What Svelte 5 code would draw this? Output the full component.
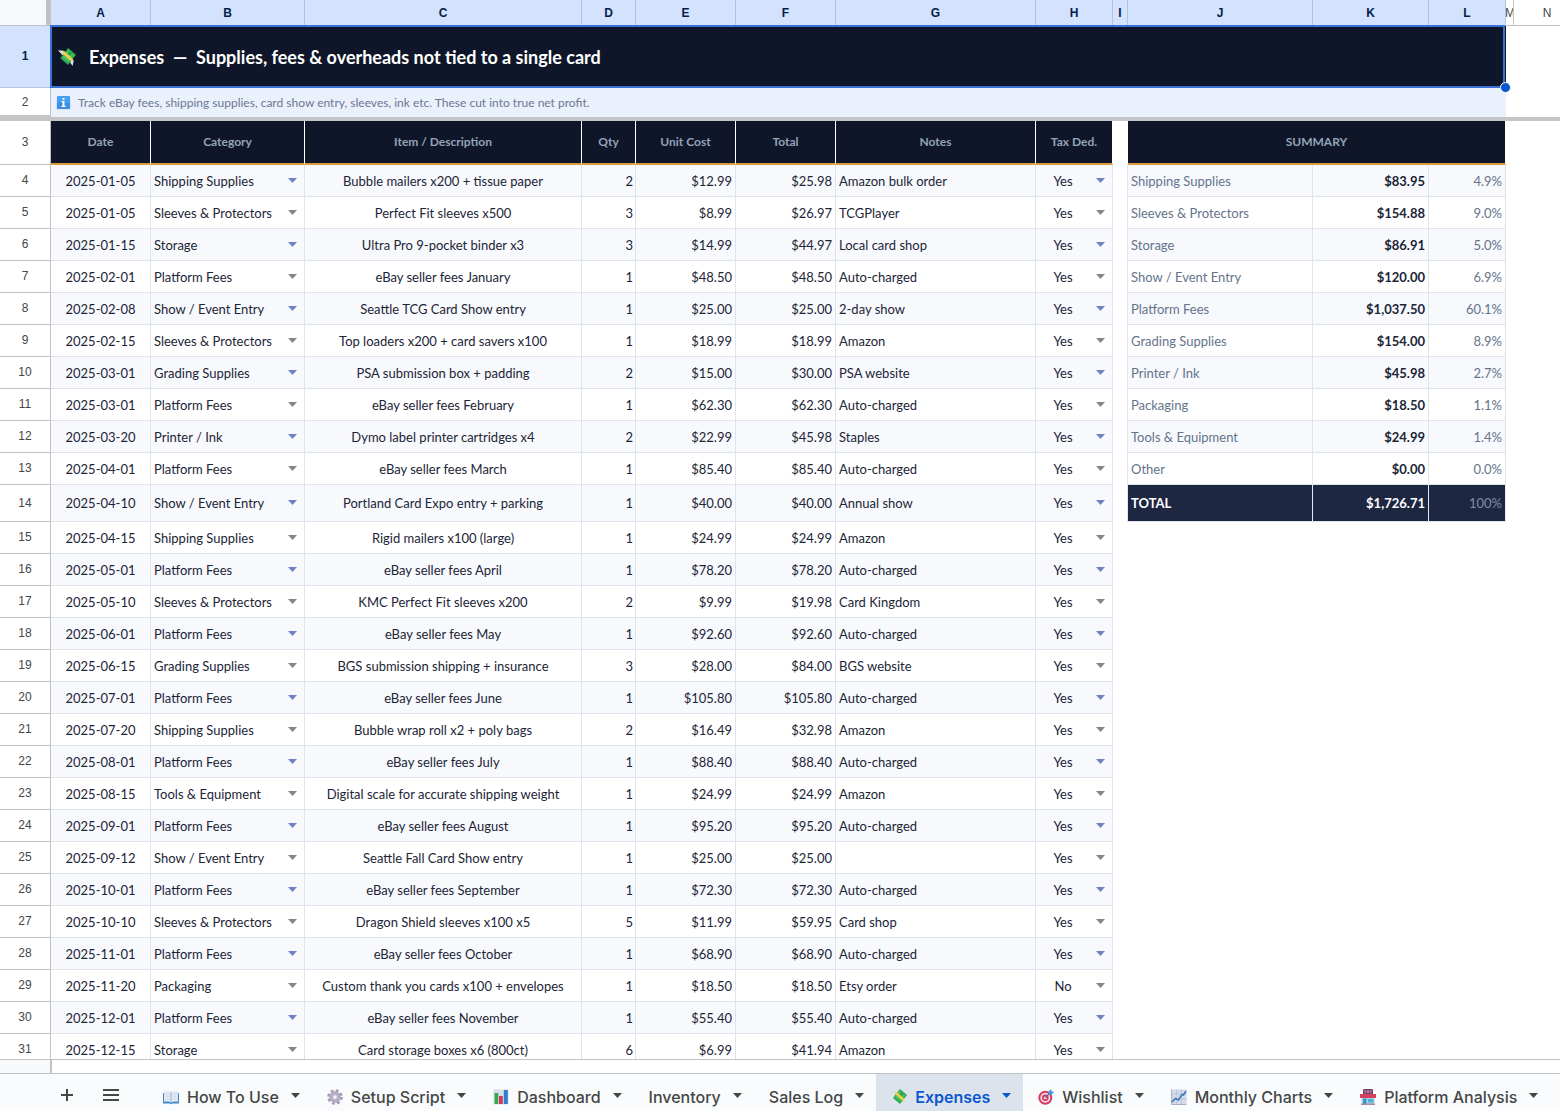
<script>
  const columns = ['A', 'B', 'C', 'D', 'E', 'F', 'G', 'H', 'I', 'J', 'K', 'L', 'M', 'N'];

  const categories = [
    'Shipping Supplies', 'Sleeves & Protectors', 'Storage', 'Show / Event Entry', 'Platform Fees',
    'Grading Supplies', 'Printer / Ink', 'Packaging', 'Tools & Equipment', 'Other'
  ];

  const expenses = [
    ['2025-01-05', 'Shipping Supplies', 'Bubble mailers x200 + tissue paper', '2', '$12.99', '$25.98', 'Amazon bulk order', 'Yes'],
    ['2025-01-05', 'Sleeves & Protectors', 'Perfect Fit sleeves x500', '3', '$8.99', '$26.97', 'TCGPlayer', 'Yes'],
    ['2025-01-15', 'Storage', 'Ultra Pro 9-pocket binder x3', '3', '$14.99', '$44.97', 'Local card shop', 'Yes'],
    ['2025-02-01', 'Platform Fees', 'eBay seller fees January', '1', '$48.50', '$48.50', 'Auto-charged', 'Yes'],
    ['2025-02-08', 'Show / Event Entry', 'Seattle TCG Card Show entry', '1', '$25.00', '$25.00', '2-day show', 'Yes'],
    ['2025-02-15', 'Sleeves & Protectors', 'Top loaders x200 + card savers x100', '1', '$18.99', '$18.99', 'Amazon', 'Yes'],
    ['2025-03-01', 'Grading Supplies', 'PSA submission box + padding', '2', '$15.00', '$30.00', 'PSA website', 'Yes'],
    ['2025-03-01', 'Platform Fees', 'eBay seller fees February', '1', '$62.30', '$62.30', 'Auto-charged', 'Yes'],
    ['2025-03-20', 'Printer / Ink', 'Dymo label printer cartridges x4', '2', '$22.99', '$45.98', 'Staples', 'Yes'],
    ['2025-04-01', 'Platform Fees', 'eBay seller fees March', '1', '$85.40', '$85.40', 'Auto-charged', 'Yes'],
    ['2025-04-10', 'Show / Event Entry', 'Portland Card Expo entry + parking', '1', '$40.00', '$40.00', 'Annual show', 'Yes'],
    ['2025-04-15', 'Shipping Supplies', 'Rigid mailers x100 (large)', '1', '$24.99', '$24.99', 'Amazon', 'Yes'],
    ['2025-05-01', 'Platform Fees', 'eBay seller fees April', '1', '$78.20', '$78.20', 'Auto-charged', 'Yes'],
    ['2025-05-10', 'Sleeves & Protectors', 'KMC Perfect Fit sleeves x200', '2', '$9.99', '$19.98', 'Card Kingdom', 'Yes'],
    ['2025-06-01', 'Platform Fees', 'eBay seller fees May', '1', '$92.60', '$92.60', 'Auto-charged', 'Yes'],
    ['2025-06-15', 'Grading Supplies', 'BGS submission shipping + insurance', '3', '$28.00', '$84.00', 'BGS website', 'Yes'],
    ['2025-07-01', 'Platform Fees', 'eBay seller fees June', '1', '$105.80', '$105.80', 'Auto-charged', 'Yes'],
    ['2025-07-20', 'Shipping Supplies', 'Bubble wrap roll x2 + poly bags', '2', '$16.49', '$32.98', 'Amazon', 'Yes'],
    ['2025-08-01', 'Platform Fees', 'eBay seller fees July', '1', '$88.40', '$88.40', 'Auto-charged', 'Yes'],
    ['2025-08-15', 'Tools & Equipment', 'Digital scale for accurate shipping weight', '1', '$24.99', '$24.99', 'Amazon', 'Yes'],
    ['2025-09-01', 'Platform Fees', 'eBay seller fees August', '1', '$95.20', '$95.20', 'Auto-charged', 'Yes'],
    ['2025-09-12', 'Show / Event Entry', 'Seattle Fall Card Show entry', '1', '$25.00', '$25.00', '', 'Yes'],
    ['2025-10-01', 'Platform Fees', 'eBay seller fees September', '1', '$72.30', '$72.30', 'Auto-charged', 'Yes'],
    ['2025-10-10', 'Sleeves & Protectors', 'Dragon Shield sleeves x100 x5', '5', '$11.99', '$59.95', 'Card shop', 'Yes'],
    ['2025-11-01', 'Platform Fees', 'eBay seller fees October', '1', '$68.90', '$68.90', 'Auto-charged', 'Yes'],
    ['2025-11-20', 'Packaging', 'Custom thank you cards x100 + envelopes', '1', '$18.50', '$18.50', 'Etsy order', 'No'],
    ['2025-12-01', 'Platform Fees', 'eBay seller fees November', '1', '$55.40', '$55.40', 'Auto-charged', 'Yes'],
    ['2025-12-15', 'Storage', 'Card storage boxes x6 (800ct)', '6', '$6.99', '$41.94', 'Amazon', 'Yes']
  ];

  const summary = [
    ['Shipping Supplies', '$83.95', '4.9%'],
    ['Sleeves & Protectors', '$154.88', '9.0%'],
    ['Storage', '$86.91', '5.0%'],
    ['Show / Event Entry', '$120.00', '6.9%'],
    ['Platform Fees', '$1,037.50', '60.1%'],
    ['Grading Supplies', '$154.00', '8.9%'],
    ['Printer / Ink', '$45.98', '2.7%'],
    ['Packaging', '$18.50', '1.1%'],
    ['Tools & Equipment', '$24.99', '1.4%'],
    ['Other', '$0.00', '0.0%'],
    ['TOTAL', '$1,726.71', '100%']
  ];

  const tabs = [
    ['book', 'How To Use'], ['gear', 'Setup Script'], ['bars', 'Dashboard'], ['', 'Inventory'], ['', 'Sales Log'],
    ['money', 'Expenses'], ['target', 'Wishlist'], ['trend', 'Monthly Charts'], ['store', 'Platform Analysis']
  ];
  let active = $state('Expenses');
</script>

{#snippet icon(name)}
  <svg class="icon" viewBox="0 0 16 16" aria-hidden="true">
    {#if name === 'book'}
      <path d="M0 4h16v10.500H9l-1 1-1-1H0z" fill="#3d88c8" />
      <path d="M1 2.500c3-.8 5.500-.6 7 .6 1.500-1.200 4-1.400 7-.6v10.300c-3-.6-5.500-.4-7 .6-1.500-1-4-1.200-7-.6z" fill="#e3e8f2" />
      <path d="M8 3v10.400" stroke="#9fb2cf" stroke-width="1" />
      <path d="M2.500 5c1.500-.3 3-.2 4 .2M2.500 7.500c1.500-.3 3-.2 4 .2M2.500 10c1.500-.3 3-.2 4 .2M13.500 5c-1.500-.3-3-.2-4 .2M13.500 7.500c-1.500-.3-3-.2-4 .2M13.500 10c-1.500-.3-3-.2-4 .2" stroke="#cfd8e8" stroke-width=".8" fill="none" />
    {:else if name === 'gear'}
      <circle cx="8" cy="8" r="6.500" fill="none" stroke="#a69bb5" stroke-width="2.600" stroke-dasharray="2.800 2.300" />
      <circle cx="8" cy="8" r="4.300" fill="none" stroke="#b3a8c2" stroke-width="3" />
      <circle cx="8" cy="8" r="2.400" fill="#f4f2f8" stroke="#a296b3" stroke-width=".8" />
    {:else if name === 'bars'}
      <rect x=".5" y=".5" width="15" height="15" rx="1" fill="#d9dfea" />
      <rect x="1.500" y="4" width="3.800" height="11" fill="#36a852" />
      <rect x="6" y="7" width="3.800" height="8" fill="#d8365f" />
      <rect x="10.800" y="1" width="4" height="14" fill="#2b7fd0" />
    {:else if name === 'money'}
      <path d="M0 2l5 .5 5 4L4 6.500z" fill="#d9e2e6" />
      <path d="M10 9l4 2-1 5-3.500-5z" fill="#d9e2e6" />
      <path d="M9 0l7 6-7 9-7-6z" fill="#2fa84f" />
      <path d="M9 1.800l5 4.400-5 6.400-5-4.400z" fill="#46c465" />
      <path d="M3.500 4.500l2-1.800 8 7.300-1.600 2z" fill="#f2cf4a" />
      <circle cx="10.500" cy="5" r="1.500" fill="#2a9647" />
    {:else if name === 'target'}
      <circle cx="7.300" cy="8.700" r="7" fill="#d93a60" />
      <circle cx="7.300" cy="8.700" r="5" fill="#f3dbe5" />
      <circle cx="7.300" cy="8.700" r="3.300" fill="#d93a60" />
      <circle cx="7.300" cy="8.700" r="1.500" fill="#f3dbe5" />
      <path d="M7.300 8.700l5-5" stroke="#5b5f8a" stroke-width="1.200" />
      <path d="M10.500 5.500L10.300 2.800 13 0l.6 2.300L16 3l-2.700 2.700z" fill="#3d9be0" />
    {:else if name === 'trend'}
      <rect x=".5" y=".5" width="15" height="15" rx="1" fill="#d5daea" />
      <path d="M.5 5h15M.5 10h15M5.500.500v15M10.500.500v15" stroke="#b8bfd8" stroke-width=".7" />
      <path d="M.5.500v15h15" fill="none" stroke="#a9afcc" stroke-width="1" />
      <path d="M1 13l3.500-3.500 3 1.500 3.500-5.500 1.500.500L15 2" fill="none" stroke="#3a78b8" stroke-width="1.500" />
    {:else if name === 'store'}
      <rect x="3" y="0" width="10" height="5" rx=".5" fill="#7a4468" />
      <path d="M4.500 1.500l1.500 2M8 1.200v2.500M11.500 1.500l-1.500 2" stroke="#e8c9d8" stroke-width=".9" />
      <rect x="1.500" y="7" width="13" height="8.500" fill="#a9d3e8" />
      <rect x="3" y="9.500" width="3.500" height="6" fill="#3d91c4" />
      <rect x="8" y="10" width="5.500" height="3.500" fill="#4cb4cf" />
      <path d="M0 5h16v4H0z" fill="#d5405f" />
      <path d="M1 14.500h14v1.500H1z" fill="#a88aa0" />
    {:else if name === 'info'}
      <rect x="1" y="1" width="14" height="14" rx="1" fill="#4aa0f0" />
      <path d="M1 8h14v7H1z" fill="#3c8fe6" />
      <rect x="7" y="3.200" width="2" height="2" fill="#fff" />
      <path d="M6 6.500h3v5h1.200v1.300H5.800v-1.300H7V7.800H6z" fill="#fff" />
    {/if}
  </svg>
{/snippet}

{#snippet caret()}
  <svg class="caret" viewBox="0 0 9 5" aria-hidden="true"><path d="M0 0h9L4.500 5z" /></svg>
{/snippet}

<main>
  <div class="sheet">
    <table>
      <colgroup>
        <col class="w-num" /><col class="w-100" /><col class="w-b" /><col class="w-c" /><col class="w-d" />
        <col class="w-100" /><col class="w-100" /><col class="w-g" /><col class="w-h" /><col class="w-i" />
        <col class="w-j" /><col class="w-k" /><col class="w-h" /><col class="w-m" /><col />
      </colgroup>
      <thead>
        <tr class="letters">
          <td class="corner"></td>
          {#each columns as c, i}
            <th scope="col" class:selected={i < 12} class:narrow={c === 'M'}>{c}</th>
          {/each}
        </tr>
      </thead>
      <tbody>
        <tr class="title">
          <th scope="row" class="num selected">1</th>
          <td colspan="12" class="banner">
            <h1>{@render icon('money')}<span>Expenses &nbsp;— &nbsp;Supplies, fees &amp; overheads not tied to a single card</span></h1>
            <span class="handle"></span>
          </td>
          <td></td><td></td>
        </tr>
        <tr class="hint">
          <th scope="row" class="num">2</th>
          <td colspan="12" class="note">
            <p>{@render icon('info')}<span>Track eBay fees, shipping supplies, card show entry, sleeves, ink etc. These cut into true net profit.</span></p>
          </td>
          <td></td><td></td>
        </tr>
        <tr class="freeze"><td colspan="15"></td></tr>
        <tr class="heads">
          <th scope="row" class="num">3</th>
          {#each ['Date', 'Category', 'Item / Description', 'Qty', 'Unit Cost', 'Total', 'Notes', 'Tax Ded.'] as h}
            <th scope="col" class="head">{h}</th>
          {/each}
          <td></td>
          <th scope="colgroup" colspan="3" class="head">SUMMARY</th>
          <td></td><td></td>
        </tr>
        {#each expenses as r, i}
          {@const s = summary[i]}
          <tr class="data" class:even={i % 2 === 0} class:tall={i === 10}>
            <th scope="row" class="num">{i + 4}</th>
            <td class="cell center">{r[0]}</td>
            <td class="cell pick">
              <div class="picker">
                <select aria-label="Category, row {i + 4}" value={r[1]}>
                  {#each categories as c}<option>{c}</option>{/each}
                </select>
                {@render caret()}
              </div>
            </td>
            <td class="cell center">{r[2]}</td>
            <td class="cell right tight">{r[3]}</td>
            <td class="cell right">{r[4]}</td>
            <td class="cell right">{r[5]}</td>
            <td class="cell">{r[6]}</td>
            <td class="cell pick">
              <div class="picker mid">
                <select aria-label="Tax deductible, row {i + 4}" value={r[7]}>
                  <option>Yes</option><option>No</option>
                </select>
                {@render caret()}
              </div>
            </td>
            {#if s}
              <td class="edge"></td>
              <td class="cell label" class:total={i === 10}>{s[0]}</td>
              <td class="cell right amount" class:total={i === 10}>{s[1]}</td>
              <td class="cell right share" class:total={i === 10}>{s[2]}</td>
              <td></td><td></td>
            {:else}
              <td colspan="6"></td>
            {/if}
          </tr>
        {/each}
      </tbody>
    </table>
  </div>
  <div class="scroll"><span></span></div>
  <nav aria-label="Sheets">
    <div class="tools">
      <button aria-label="Add sheet"><svg viewBox="0 0 12 12"><path d="M6 0v12M0 6h12" /></svg></button>
      <button aria-label="All sheets"><svg class="menu" viewBox="0 0 16 12"><path d="M0 1h16M0 6h16M0 11h16" /></svg></button>
    </div>
    {#each tabs as [ic, name]}
      <button class="tab" class:active={active === name} aria-current={active === name ? 'page' : undefined} onclick={() => (active = name)}>
        {#if ic}{@render icon(ic)}{/if}
        <span>{name}</span>
        {@render caret()}
      </button>
    {/each}
  </nav>
</main>

<style>
  :global(body) { margin: 0; background: #fff; }
  main {
    display: flex;
    flex-direction: column;
    height: 100vh;
    overflow: hidden;
    font-family: Lato, sans-serif;
    font-size: 13px;
    line-height: 18px;
    color: #1c2536;
  }
  .sheet { flex: 1; min-height: 0; overflow: hidden; }
  table {
    table-layout: fixed;
    width: 100%;
    min-width: 1581px;
    border-collapse: separate;
    border-spacing: 0;
  }
  .w-num { width: 51px; }
  .w-100 { width: 100px; }
  .w-b { width: 154px; }
  .w-c { width: 277px; }
  .w-d { width: 54px; }
  .w-g { width: 200px; }
  .w-h { width: 77px; }
  .w-i { width: 15px; }
  .w-j { width: 185px; }
  .w-k { width: 116px; }
  .w-m { width: 8px; }
  th, td { box-sizing: border-box; padding: 0; white-space: nowrap; }

  .letters { height: 26px; }
  .letters th {
    font: 400 12px/24px "Liberation Sans", sans-serif;
    color: #444746;
    border-right: 1px solid #c4c7c9;
    border-bottom: 1px solid #c0c3c6;
    overflow: hidden;
  }
  .letters th.selected { background: #d3e3fd; color: #041e49; font-weight: 700; border-right-color: #b3c3dd; }
  .letters th.narrow { text-indent: -1px; }
  .corner { background: #f8f9fa; border-right: 5px solid #c0c2c4; border-bottom: 1px solid #c0c3c6; }

  .num {
    font: 400 12px/18px "Liberation Sans", sans-serif;
    color: #444746;
    text-align: center;
    border-right: 1px solid #c0c3c6;
    border-bottom: 1px solid #c0c3c6;
    padding-bottom: 1px;
  }
  .num.selected { background: #d3e3fd; color: #041e49; font-weight: 700; border-bottom-color: #b3c3dd; }

  .title { height: 62px; }
  .banner { position: relative; background: #0f1629; }
  .banner::after {
    content: "";
    position: absolute;
    inset: -1px 1px 0 -1px;
    border: 2px solid #3a72d8;
    pointer-events: none;
  }
  h1 {
    display: flex;
    align-items: center;
    gap: 13px;
    margin: 0;
    padding-left: 7px;
    font-size: 18px;
    line-height: 22px;
    font-weight: 700;
    color: #fff;
  }
  .icon { width: 16px; height: 16px; flex: none; }
  h1 .icon { width: 18px; height: 18px; }
  .handle {
    position: absolute;
    right: -5px;
    bottom: -5px;
    z-index: 1;
    width: 9px;
    height: 9px;
    border: 1px solid #fff;
    border-radius: 50%;
    background: #0b57d0;
  }
  .hint { height: 29px; }
  .hint .num { border-bottom: 2px solid #c4c5c7; padding-bottom: 0; }
  .note { background: #ebf0fd; }
  .note p { display: flex; align-items: center; gap: 7px; margin: 0; padding-left: 5px; font-size: 12px; color: #6b7890; }
  .note .icon { width: 15px; height: 15px; }
  .freeze { height: 4px; }
  .freeze td { background: #c4c5c7; }

  .heads { height: 44px; }
  .head {
    background: #0f1629;
    color: #94a3b8;
    font-size: 12px;
    font-weight: 700;
    text-align: center;
    border-right: 1px solid #fff;
    border-bottom: 2px solid #dd9a3c;
  }

  .data { height: 32px; }
  .data.tall { height: 37px; }
  .cell {
    padding: 1px 3px 0;
    border-right: 1px solid #dee3ec;
    border-bottom: 1px solid #dee3ec;
    overflow: hidden;
  }
  .tall .cell { padding-top: 0; }
  .even .cell { background: #f7f9fd; }
  .edge { border-right: 1px solid #dee3ec; }
  .center { text-align: center; }
  .right { text-align: right; }
  .right.tight { padding-right: 2px; }
  .cell.pick { padding: 0; }
  .picker { display: flex; align-items: center; padding: 1px 7px 0 3px; }
  .tall .picker { padding-top: 0; }
  .picker select {
    flex: 1;
    min-width: 0;
    appearance: none;
    border: 0;
    margin: 0;
    padding: 0;
    background: transparent;
    font: inherit;
    color: inherit;
  }
  .picker.mid select { text-align: center; text-align-last: center; padding-right: 9px; }
  .caret { width: 9px; height: 5px; flex: none; fill: #80868b; }
  .data .caret { margin-bottom: 2px; pointer-events: none; }
  .even .caret { fill: #6f83c4; }
  .label, .share { color: #64748b; }
  .amount { font-weight: 700; }
  .even .cell.total { background: #1e2742; border-right-color: #e6eaf2; color: #fff; font-weight: 700; }
  .even .cell.share.total { color: #7f8da6; font-weight: 400; }

  .scroll { flex: none; height: 13px; border-top: 1px solid #c0c3c6; border-bottom: 1px solid #c0c3c6; display: flex; }
  .scroll span { width: 50px; background: #f8f9fa; border-right: 2px solid #c0c3c6; }

  nav { flex: none; display: flex; height: 37px; background: #f9fbfd; overflow: hidden; }
  nav button {
    display: flex;
    align-items: center;
    border: 0;
    margin: 0;
    padding: 0;
    background: transparent;
    color: #444746;
    font: 500 16px/20px Inter, sans-serif;
    white-space: nowrap;
    flex: none;
  }
  .tools { display: flex; flex: none; width: 148px; padding: 4px 0 0 61px; box-sizing: border-box; gap: 30px; }
  .tools svg { width: 12px; height: 12px; stroke: #444746; stroke-width: 2; fill: none; }
  .tools .menu { width: 16px; }
  .tab { padding: 8px 12px 0 15px; gap: 8px; }
  .tab .caret { fill: #444746; margin-left: 4px; margin-bottom: 3px; }
  .tab.active { background: #dde3ec; color: #0b57d0; font-weight: 600; }
  .tab.active .caret { fill: #0b57d0; }
</style>
